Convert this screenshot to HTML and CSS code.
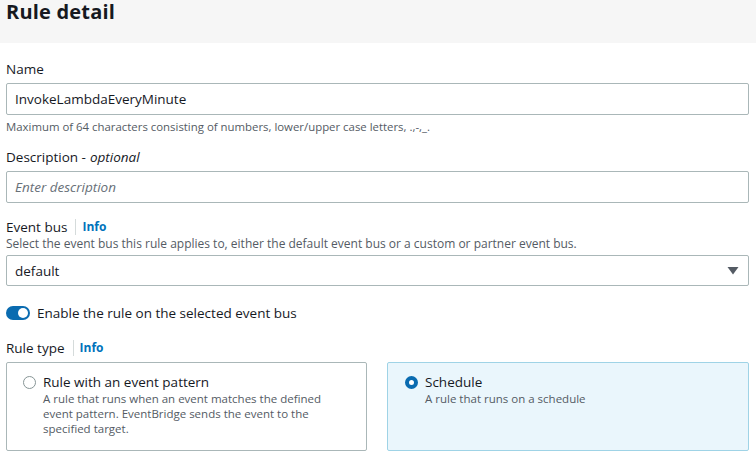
FILE: index.html
```html
<!DOCTYPE html>
<html>
<head>
<meta charset="utf-8">
<link rel="stylesheet" href="styles.css">
</head>
<body>
<div class="header"><h2 class="title">Rule detail</h2></div>
<div class="content">
  <div class="field f-name">
    <div class="label">Name</div>
    <div class="input">InvokeLambdaEveryMinute</div>
    <div class="hint">Maximum of 64 characters consisting of numbers, lower/upper case letters, .,-,_.</div>
  </div>
  <div class="field f-desc">
    <div class="label">Description - <i>optional</i></div>
    <div class="input placeholder">Enter description</div>
  </div>
  <div class="field f-bus">
    <div class="label">Event bus<span class="sep"></span><span class="info">Info</span></div>
    <div class="hint hint-top">Select the event bus this rule applies to, either the default event bus or a custom or partner event bus.</div>
    <div class="input select"><span>default</span><svg width="12" height="9" viewBox="0 0 12 9"><path d="M0.5 1h11L6 8.5z" fill="#545b64"/></svg></div>
  </div>
  <div class="toggle-row">
    <span class="toggle"><span class="knob"></span></span>
    <span class="toggle-text">Enable the rule on the selected event bus</span>
  </div>
  <div class="label rt">Rule type<span class="sep"></span><span class="info">Info</span></div>
  <div class="cards">
    <div class="card">
      <span class="radio"></span>
      <div class="card-body">
        <div class="card-title">Rule with an event pattern</div>
        <div class="card-desc">A rule that runs when an event matches the defined event pattern. EventBridge sends the event to the specified target.</div>
      </div>
    </div>
    <div class="card selected">
      <span class="radio on"></span>
      <div class="card-body">
        <div class="card-title">Schedule</div>
        <div class="card-desc">A rule that runs on a schedule</div>
      </div>
    </div>
  </div>
</div>
</body>
</html>
```

FILE: styles.css
```css
* { box-sizing: border-box; }
body {
  margin: 0;
  background: #fff;
  font-family: "Open Sans", "Noto Sans", sans-serif;
  color: #16191f;
}
.header {
  height: 43px;
  background: #f6f6f6;
  padding: 0 6px;
}
.title {
  margin: 0;
  font-size: 20px;
  font-weight: 700;
  line-height: 24px;
  letter-spacing: 0.2px;
}
.content {
  padding: 16px 7px 0 6px;
}
.label {
  font-size: 13.5px;
  line-height: 20px;
  display: flex;
  align-items: center;
}
.label i { margin-left: 4px; }
.sep {
  width: 1px;
  height: 16px;
  background: #d5dbdb;
  margin: 0 6px 0 8px;
}
.info {
  color: #0073bb;
  font-weight: 700;
  font-size: 12px;
}
.input {
  height: 32px;
  border: 1px solid #aab7b8;
  border-radius: 2px;
  margin-top: 4px;
  padding: 0 8px;
  font-size: 13.5px;
  display: flex;
  align-items: center;
}
.placeholder {
  color: #687078;
  font-style: italic;
}
.select {
  height: 31px;
  margin-top: 4px;
  justify-content: space-between;
  padding-right: 9px;
}
.hint {
  font-size: 11.4px;
  color: #545b64;
  line-height: 14px;
  margin-top: 5px;
}
.hint-top { margin-top: 0; font-size: 12px; }
.f-desc { margin-top: 13px; }
.f-bus { margin-top: 14px; }
.toggle-row {
  display: flex;
  align-items: center;
  margin-top: 18px;
  height: 18px;
}
.toggle {
  width: 24px;
  height: 14px;
  border-radius: 7px;
  background: #0a6bb0;
  position: relative;
  margin-right: 7px;
}
.knob {
  position: absolute;
  right: 2px;
  top: 2px;
  width: 10px;
  height: 10px;
  border-radius: 50%;
  background: #fff;
}
.toggle-text { font-size: 13.5px; }
.rt { margin-top: 16px; }
.cards {
  display: grid;
  grid-template-columns: 361px 362px;
  gap: 20px;
  margin-top: 4px;
}
.card {
  height: 89px;
  border: 1px solid #aab7b8;
  border-radius: 2px;
  padding: 10px 10px 0 16px;
  display: flex;
  align-items: flex-start;
}
.card.selected {
  background: #eaf6fc;
  border-color: #9fd3e6;
  padding-left: 17px;
}
.radio {
  width: 13px;
  height: 13px;
  border-radius: 50%;
  border: 1.5px solid #879596;
  margin-top: 3px;
  margin-right: 7px;
  flex: none;
}
.radio.on {
  border: 4px solid #0a6bb0;
  background: #fff;
}
.card-title {
  font-size: 13.5px;
  line-height: 18px;
}
.card-desc {
  font-size: 11.5px;
  line-height: 15px;
  color: #545b64;
  max-width: 290px;
}
```
